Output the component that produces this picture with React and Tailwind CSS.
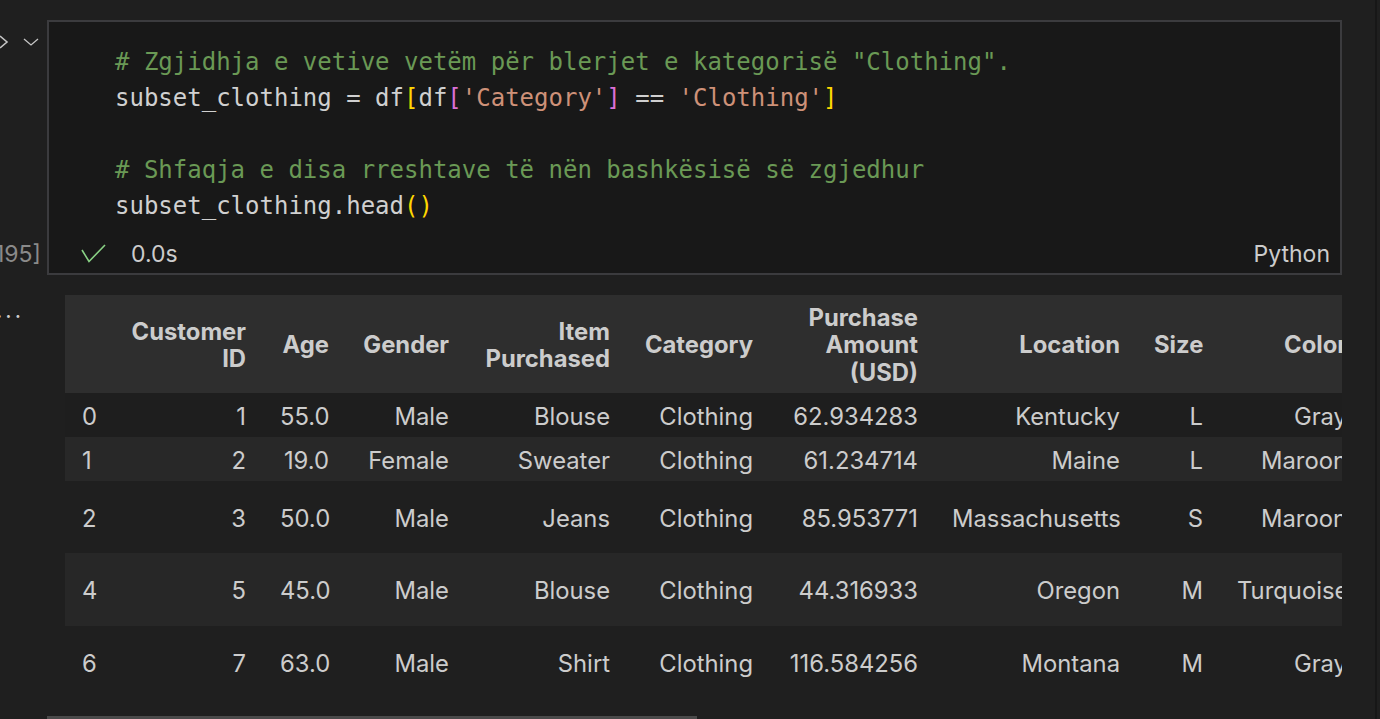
import React from 'react';

const mono = { fontFamily: '"DejaVu Sans Mono", "Liberation Mono", monospace' };

const columns = [
  { key: 'idx', label: [''], width: 47, align: 'text-left' },
  { key: 'id', label: ['Customer', 'ID'], width: 151 },
  { key: 'age', label: ['Age'], width: 83 },
  { key: 'gender', label: ['Gender'], width: 120 },
  { key: 'item', label: ['Item', 'Purchased'], width: 161 },
  { key: 'cat', label: ['Category'], width: 143 },
  { key: 'amt', label: ['Purchase', 'Amount', '(USD)'], width: 165 },
  { key: 'loc', label: ['Location'], width: 202 },
  { key: 'size', label: ['Size'], width: 83 },
  { key: 'color', label: ['Color'], width: 144 },
];

const rows = [
  { h: 'h-[44px]', bg: 'bg-[#1e1e1e]', cells: ['0', '1', '55.0', 'Male', 'Blouse', 'Clothing', '62.934283', 'Kentucky', 'L', 'Gray'] },
  { h: 'h-[44px]', bg: 'bg-[#282828]', cells: ['1', '2', '19.0', 'Female', 'Sweater', 'Clothing', '61.234714', 'Maine', 'L', 'Maroon'] },
  { h: 'h-[72px]', bg: 'bg-[#1f1f1f]', cells: ['2', '3', '50.0', 'Male', 'Jeans', 'Clothing', '85.953771', 'Massachusetts', 'S', 'Maroon'] },
  { h: 'h-[73px]', bg: 'bg-[#272727]', cells: ['4', '5', '45.0', 'Male', 'Blouse', 'Clothing', '44.316933', 'Oregon', 'M', 'Turquoise'] },
  { h: 'h-[72px]', bg: 'bg-[#1f1f1f]', cells: ['6', '7', '63.0', 'Male', 'Shirt', 'Clothing', '116.584256', 'Montana', 'M', 'Gray'] },
];

const C = ({ c, children }) => <span className={c}>{children}</span>;

export default function App() {
  return (
    <div
      className="w-[1380px] h-[719px] bg-[#1f1f1f] overflow-hidden flex text-[#cccccc]"
      style={{ fontFamily: 'Inter, "Noto Sans", sans-serif' }}
    >
      <div className="w-[1375px] flex flex-col pt-[20px]">
        {/* code cell */}
        <div className="flex">
          <div className="w-[47px] flex flex-col justify-between overflow-hidden">
            <div className="flex items-center h-[44px] text-[#c5c5c5]">
              <svg width="10" height="14" viewBox="0 0 10 14" className="-ml-[1px]">
                <path d="M1 1 L8 7 L1 13" fill="none" stroke="currentColor" strokeWidth="1.6" />
              </svg>
              <svg width="16" height="10" viewBox="0 0 16 10" className="ml-[14px]">
                <path d="M1 2 L8 8 L15 2" fill="none" stroke="currentColor" strokeWidth="1.3" />
              </svg>
            </div>
            <div className="h-[36px] mb-[3px] flex items-center justify-end pr-[6px] text-[23px] text-[#8a8a8a] whitespace-nowrap">
              [195]
            </div>
          </div>
          <div className="w-[1295px] border-2 border-[#3b3b3e] bg-[#181818]">
            <div className="pl-[66px] pt-[22px] text-[24px] leading-[36px] whitespace-pre text-[#d0d0d0]" style={mono}>
              <div><C c="text-[#6a9955]"># Zgjidhja e vetive vetëm për blerjet e kategorisë "Clothing".</C></div>
              <div>
                subset_clothing = df<C c="text-[#ffd700]">[</C>df<C c="text-[#da70d6]">[</C>
                <C c="text-[#ce9178]">'Category'</C><C c="text-[#da70d6]">]</C> == <C c="text-[#ce9178]">'Clothing'</C>
                <C c="text-[#ffd700]">]</C>
              </div>
              <div>&nbsp;</div>
              <div><C c="text-[#6a9955]"># Shfaqja e disa rreshtave të nën bashkësisë së zgjedhur</C></div>
              <div>subset_clothing.head<C c="text-[#ffd700]">()</C></div>
            </div>
            <div className="mt-[12px] mb-[1px] h-[36px] flex items-center pl-[32px] pr-[10px] text-[23px]">
              <svg width="26" height="20" viewBox="0 0 26 20">
                <path d="M1 6 L8 17.5 L24 1" fill="none" stroke="#89d185" strokeWidth="1.6" />
              </svg>
              <span className="ml-[24px] text-[#cccccc]">0.0s</span>
              <span className="ml-auto text-[#cccccc]">Python</span>
            </div>
          </div>
        </div>

        {/* output */}
        <div className="flex mt-[20px]">
          <div className="w-[47px] overflow-hidden">
            <div className="-ml-[4px] mt-[-1px] text-[22px] text-[#cccccc] tracking-[3px]">...</div>
          </div>
          <div className="pl-[18px]">
            <div className="w-[1277px] overflow-hidden">
              <table className="table-fixed border-collapse w-[1299px] text-[23.8px]">
                <colgroup>
                  {columns.map((c) => (
                    <col key={c.key} style={{ width: c.width }} />
                  ))}
                </colgroup>
                <thead>
                  <tr className="h-[98px] bg-[#2e2e2e]">
                    {columns.map((c) => (
                      <th
                        key={c.key}
                        className={`px-[17px] pt-[2px] font-bold leading-[27.5px] whitespace-nowrap ${c.align || 'text-right'}`}
                      >
                        {c.label.map((l, i) => (
                          <div key={i}>{l}</div>
                        ))}
                      </th>
                    ))}
                  </tr>
                </thead>
                <tbody>
                  {rows.map((r) => (
                    <tr key={r.cells[0]} className={`${r.h} ${r.bg}`}>
                      {r.cells.map((v, i) => (
                        <td
                          key={i}
                          className={`px-[17px] pt-[3px] whitespace-nowrap ${i === 0 ? 'text-left' : 'text-right'}`}
                        >
                          {v}
                        </td>
                      ))}
                    </tr>
                  ))}
                </tbody>
              </table>
            </div>
            <div className="h-[18px]"></div>
          </div>
        </div>
        <div className="ml-[47px] w-[650px] h-[3px] bg-[#4a4a4a] mt-auto"></div>
      </div>
      <div className="w-[2px] bg-[#171717]"></div>
      <div className="flex-1"></div>
    </div>
  );
}
